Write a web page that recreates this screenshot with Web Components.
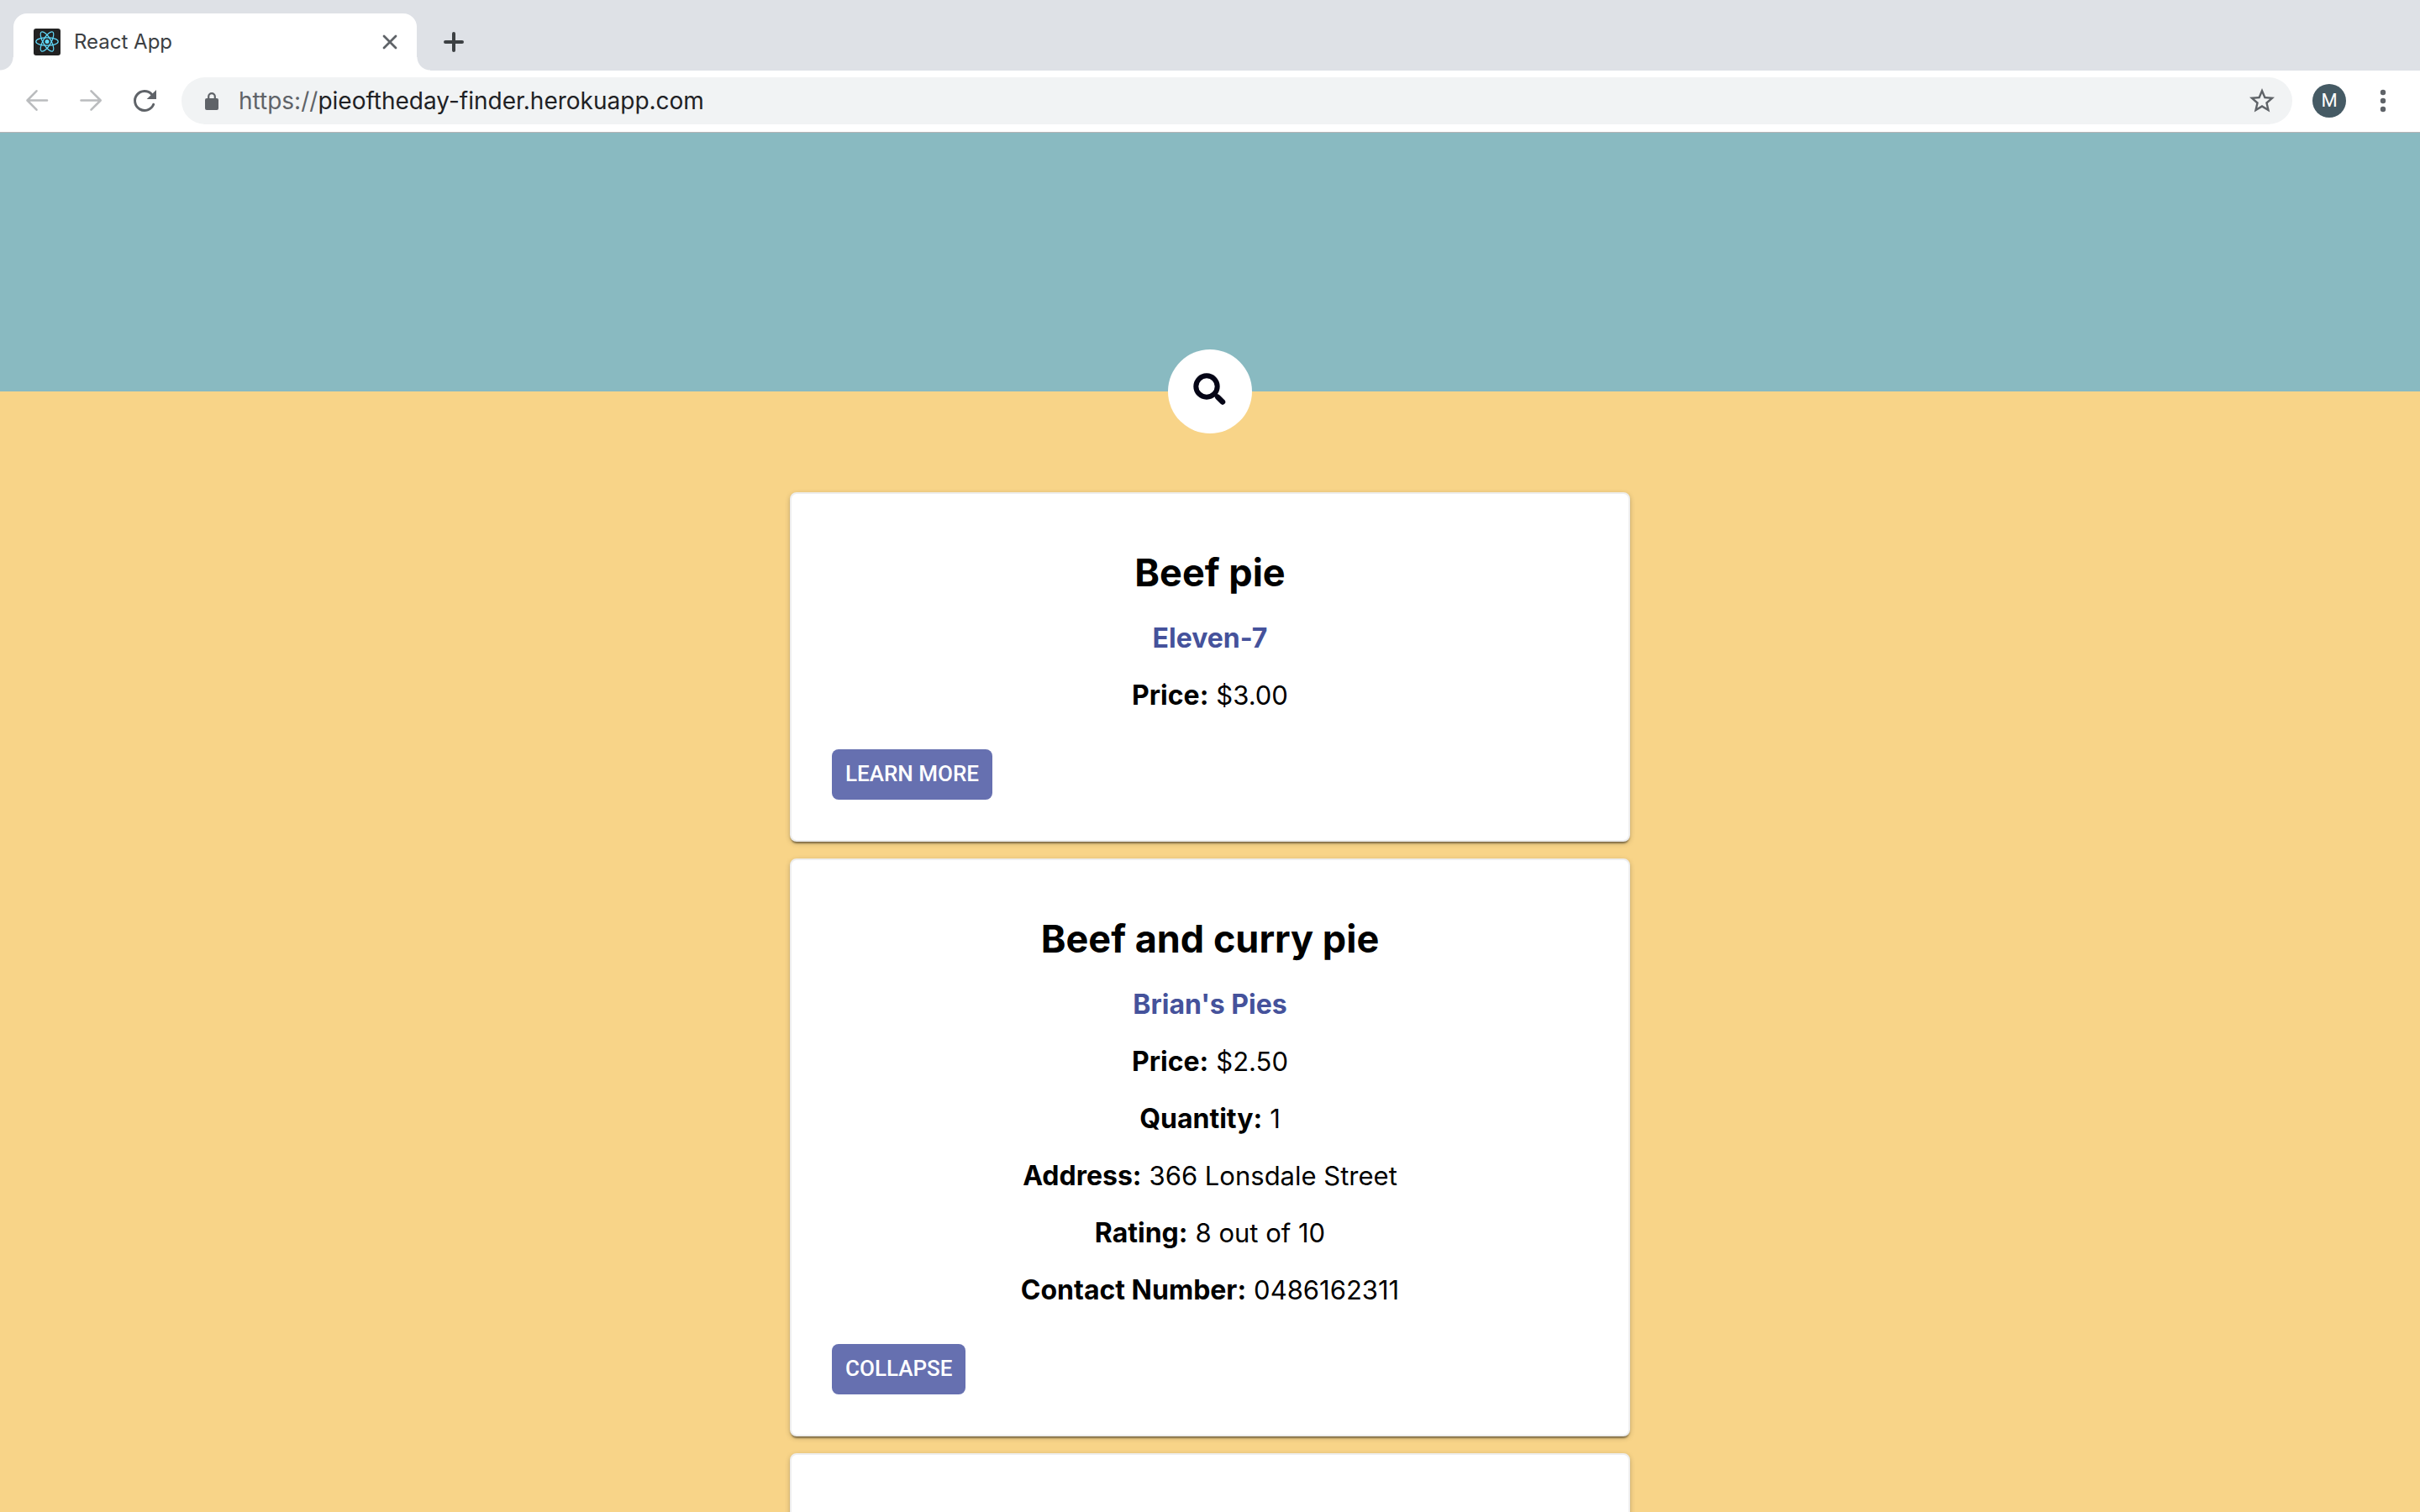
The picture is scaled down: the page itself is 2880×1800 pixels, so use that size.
<!DOCTYPE html>
<html lang="en">
<head>
<meta charset="utf-8">
<title>React App</title>
<style>
  html, body { margin: 0; height: 100%; }
  body { font-family: Inter, "Liberation Sans", sans-serif; color: #000; overflow: hidden; }
</style>
</head>
<body>
<browser-window>
  <tab-strip slot="chrome">React App</tab-strip>
  <tool-bar slot="chrome" scheme="https://" host="pieoftheday-finder.herokuapp.com" initial="M"></tool-bar>
  <pie-search></pie-search>
  <pie-list>
    <pie-card name="Beef pie" store="Eleven-7" action="Learn more">
      <pie-field label="Price">$3.00</pie-field>
    </pie-card>
    <pie-card name="Beef and curry pie" store="Brian's Pies" action="Collapse">
      <pie-field label="Price">$2.50</pie-field>
      <pie-field label="Quantity">1</pie-field>
      <pie-field label="Address">366 Lonsdale Street</pie-field>
      <pie-field label="Rating">8 out of 10</pie-field>
      <pie-field label="Contact Number">0486162311</pie-field>
    </pie-card>
    <pie-card></pie-card>
  </pie-list>
</browser-window>

<script>
  const reset = `
    :host, *, *::before { box-sizing: border-box; }
    button { margin: 0; padding: 0; border: 0; background: none; font: inherit; color: inherit; cursor: pointer; display: grid; place-items: center; flex: none; }
    svg { display: block; flex: none; }
  `;

  class Base extends HTMLElement {
    constructor() {
      super();
      this.attachShadow({ mode: 'open' });
    }
    connectedCallback() {
      this.shadowRoot.innerHTML = `<style>${reset}</style>` + this.render();
    }
  }

  customElements.define('browser-window', class extends Base {
    render() {
      return `
        <style>
          :host { display: flex; flex-direction: column; height: 100vh; overflow: hidden; background: #f8d488; }
          header { flex: none; }
          main { flex: 1; min-height: 0; overflow: hidden; }
        </style>
        <header><slot name="chrome"></slot></header>
        <main><slot></slot></main>`;
    }
  });

  customElements.define('tab-strip', class extends Base {
    render() {
      return `
        <style>
          :host { display: flex; align-items: flex-end; height: 84px; padding-left: 16px; background: #dee1e6; }
          .tab { position: relative; display: flex; align-items: center; width: 480px; height: 68px; padding: 0 20px 0 24px; gap: 16px; border-radius: 16px 16px 0 0; background: #fff; color: #3c4043; font-size: 24px; line-height: 32px; }
          .tab::before { content: ""; position: absolute; bottom: 0; left: -16px; right: -16px; height: 16px;
            background: radial-gradient(circle at 0 0, transparent 15px, #fff 16px) left / 16px 16px no-repeat,
                        radial-gradient(circle at 100% 0, transparent 15px, #fff 16px) right / 16px 16px no-repeat; }
          .name { flex: 1; }
          .close { width: 24px; height: 24px; }
          .add { width: 56px; height: 68px; margin-left: 16px; }
        </style>
        <div class="tab">
          <svg width="32" height="32" viewBox="0 0 32 32">
            <rect width="32" height="32" rx="3" fill="#222"/>
            <g fill="none" stroke="#61dafb" stroke-width="1.2">
              <ellipse cx="16" cy="15.5" rx="13.2" ry="4.7"/>
              <ellipse cx="16" cy="15.5" rx="13.2" ry="4.7" transform="rotate(60 16 15.5)"/>
              <ellipse cx="16" cy="15.5" rx="13.2" ry="4.7" transform="rotate(120 16 15.5)"/>
            </g>
            <circle cx="16" cy="15.5" r="2.5" fill="#61dafb"/>
          </svg>
          <span class="name"><slot></slot></span>
          <button class="close" aria-label="Close tab">
            <svg width="24" height="24" viewBox="0 0 24 24" stroke="#5f6368" stroke-width="2.8" stroke-linecap="round"><path d="M5 5l14 14M19 5L5 19"/></svg>
          </button>
        </div>
        <button class="add" aria-label="New tab">
          <svg width="28" height="28" viewBox="0 0 28 28" stroke="#3c4043" stroke-width="4" stroke-linecap="round"><path d="M14 4v20M4 14h20"/></svg>
        </button>`;
    }
  });

  customElements.define('tool-bar', class extends Base {
    render() {
      return `
        <style>
          :host { display: flex; align-items: center; height: 74px; padding: 0 20px 1px 12px; border-bottom: 1px solid #b6b4b6; background: #fff; color: #5f6368; }
          .nav { width: 64px; height: 56px; }
          .off { color: #babcbe; }
          .omnibox { flex: 1; display: flex; align-items: center; height: 56px; margin-left: 12px; padding: 0 18px 0 20px; border-radius: 28px; background: #f1f3f4; font-size: 28px; line-height: 36px; }
          label { margin-left: 16px; }
          input { flex: 1; min-width: 0; height: 36px; margin: 0; padding: 0; border: 0; outline: 0; background: none; font: inherit; color: #202124; }
          .avatar { width: 40px; height: 40px; margin: 0 20px 0 24px; border-radius: 50%; background: #455a64; color: #fff; font: 400 22px/40px Roboto, sans-serif; }
          .menu { width: 48px; height: 56px; }
        </style>
        <button class="nav off" aria-label="Back">
          <svg width="32" height="32" viewBox="0 0 32 32" fill="none" stroke="currentColor" stroke-width="2.6" stroke-linecap="round" stroke-linejoin="round"><path d="M28 15.5H5M15.500 4.300L4.500 15.500L15.500 26.700"/></svg>
        </button>
        <button class="nav off" aria-label="Forward">
          <svg width="32" height="32" viewBox="0 0 32 32" fill="none" stroke="currentColor" stroke-width="2.6" stroke-linecap="round" stroke-linejoin="round"><path d="M4.500 15.500H27M16.500 4.300L27.700 15.500L16.500 26.700"/></svg>
        </button>
        <button class="nav" aria-label="Reload">
          <svg width="32" height="32" viewBox="0 0 32 32"><path d="M26.700 20.300A11.500 11.500 0 1 1 24.500 8.200" fill="none" stroke="currentColor" stroke-width="3" stroke-linecap="round"/><path d="M30 3v11H18.700z" fill="currentColor"/></svg>
        </button>
        <div class="omnibox">
          <svg width="32" height="32" viewBox="0 0 32 32"><rect x="8" y="13" width="16" height="14" rx="2" fill="currentColor"/><path d="M12.200 14V11a3.800 3.800 0 0 1 7.600 0v3" fill="none" stroke="currentColor" stroke-width="2.200"/></svg>
          <label for="url">${this.getAttribute('scheme')}</label><input id="url" type="text" value="${this.getAttribute('host')}">
          <button aria-label="Bookmark">
            <svg width="36" height="36" viewBox="0 0 24 24" fill="currentColor"><path d="M22 9.240l-7.190-.62L12 2 9.190 8.630 2 9.240l5.460 4.730L5.820 21 12 17.270 18.180 21l-1.630-7.030L22 9.240zM12 15.400l-3.760 2.270 1-4.280-3.320-2.880 4.380-.38L12 6.100l1.710 4.040 4.380.38-3.320 2.880 1 4.280L12 15.400z"/></svg>
          </button>
        </div>
        <button class="avatar" aria-label="Profile">${this.getAttribute('initial')}</button>
        <button class="menu" aria-label="Menu">
          <svg width="8" height="28" viewBox="0 0 8 28" fill="currentColor"><circle cx="4" cy="4" r="3.200"/><circle cx="4" cy="14" r="3.200"/><circle cx="4" cy="24" r="3.200"/></svg>
        </button>`;
    }
  });

  customElements.define('pie-search', class extends Base {
    render() {
      return `
        <style>
          :host { position: relative; display: block; height: 308px; background: #89bac1; }
          button { position: absolute; left: 50%; bottom: 0; transform: translate(-50%, 50%); width: 100px; height: 100px; border-radius: 50%; background: #fff; }
        </style>
        <button aria-label="Search">
          <svg width="48" height="48" viewBox="0 0 48 48" fill="none" stroke="#050516"><circle cx="20" cy="18" r="12.700" stroke-width="6"/><path d="M31 28.500L39.500 37.200" stroke-width="5"/><path d="M33.500 31L39 36.500" stroke-width="6.500" stroke-linecap="round"/></svg>
        </button>`;
    }
  });

  customElements.define('pie-list', class extends Base {
    render() {
      return `
        <style>
          :host { display: flex; flex-direction: column; gap: 20px; max-width: 1000px; margin: 0 auto; padding-top: 120px; }
        </style>
        <slot></slot>`;
    }
  });

  customElements.define('pie-card', class extends Base {
    render() {
      const name = this.getAttribute('name');
      return `
        <style>
          :host { display: flex; flex-direction: column; min-height: 416px; padding: 64px 48px 48px; border: 2px solid #eee; border-radius: 8px; background: #fff; text-align: center; font-size: 32px; line-height: 36px;
            box-shadow: 0 2px 6px rgba(0,0,0,.2), 0 2px 2px rgba(0,0,0,.14), 0 4px 2px -2px rgba(0,0,0,.3); }
          h2, h3 { margin: 0; font-weight: 700; }
          h2 { font-size: 45px; line-height: 60px; }
          h3 { margin-top: 30px; font-size: inherit; }
          a { color: #45529b; text-decoration: none; }
          button { align-self: flex-start; height: 60px; margin-top: 46px; padding: 0 16px 2px; border-radius: 8px; background: #6670b0; color: #fff; font: 500 26px/32px Roboto, sans-serif; text-transform: uppercase; }
        </style>
        ${name ? `
        <h2>${name}</h2>
        <h3><a href="#">${this.getAttribute('store')}</a></h3>
        <slot></slot>
        <button>${this.getAttribute('action')}</button>` : ''}`;
    }
  });

  customElements.define('pie-field', class extends Base {
    render() {
      return `
        <style>
          :host { display: block; height: 36px; margin-top: 32px; }
          b { font-weight: 700; }
          span { font-size: 31px; }
        </style>
        <b>${this.getAttribute('label')}:</b> <span><slot></slot></span>`;
    }
  });
</script>
</body>
</html>
